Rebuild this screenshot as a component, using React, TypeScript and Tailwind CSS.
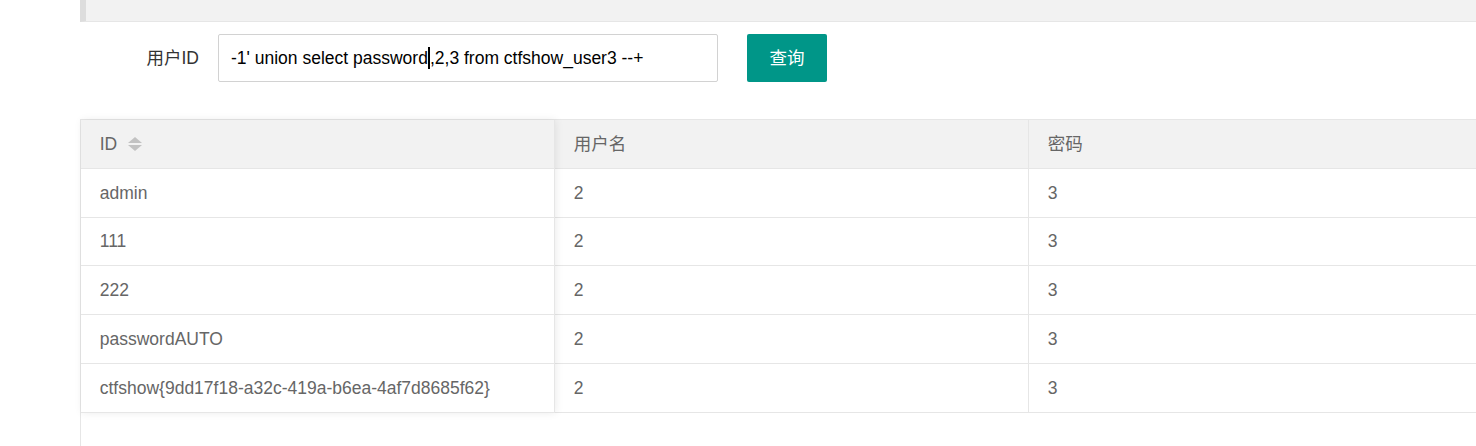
import React from "react";

const rows = [
  { id: "admin", name: "2", pass: "3" },
  { id: "111", name: "2", pass: "3" },
  { id: "222", name: "2", pass: "3" },
  { id: "passwordAUTO", name: "2", pass: "3" },
  { id: "ctfshow{9dd17f18-a32c-419a-b6ea-4af7d8685f62}", name: "2", pass: "3" },
];

const SortIcon = () => (
  <svg width="14" height="14" viewBox="0 0 14 14" className="ml-[11px]">
    <path d="M7 0 L14 6 H0 Z" fill="#c2c2c2" />
    <path d="M7 14 L14 8 H0 Z" fill="#c2c2c2" />
  </svg>
);

const cell = "h-[48.75px] border-b border-[#e6e6e6] flex items-center px-[18.75px] text-[17.5px] text-[#666] whitespace-nowrap";

const App = () => {
  return (
    <div
      className="w-[1476px] h-[446px] overflow-hidden bg-white"
      style={{ fontFamily: '"Liberation Sans", Arial, "Noto Sans CJK SC", sans-serif' }}
    >
      {/* top quote bar */}
      <div className="ml-[80px] h-[22px] bg-[#f2f2f2] border-l-[6px] border-[#dddddd] border-b border-b-[#e6e6e6]" />

      {/* search form */}
      <div className="mt-[12px] flex items-center">
        <div className="w-[218px] pr-[19px] text-right text-[17.5px] text-[#333]">用户ID</div>
        <div className="w-[500px] h-[48px] border border-[#d2d2d2] rounded-[2px] flex items-center pl-[12px] text-[17.5px] text-black whitespace-nowrap">
          <span>-1' union select password</span>
          <span className="inline-block w-[2px] h-[22px] bg-black" />
          <span>,2,3 from ctfshow_user3 --+</span>
        </div>
        <button className="ml-[29px] w-[80px] h-[48px] rounded-[2px] bg-[#009688] text-white text-[17.5px]">
          查询
        </button>
      </div>

      {/* table */}
      <div className="mt-[37px] ml-[80px] h-[400px] border-l border-t border-[#e6e6e6] flex">
        <div className="w-[474px] shrink-0 self-start relative z-10 bg-white border-r border-[#e6e6e6] shadow-[1px_0_8px_rgba(0,0,0,0.08)]">
          <div className={`${cell} bg-[#f2f2f2]`}>
            <span>ID</span>
            <SortIcon />
          </div>
          {rows.map((r, i) => (
            <div key={i} className={cell}>
              {r.id}
            </div>
          ))}
        </div>
        <div className="w-[474px] shrink-0 self-start border-r border-[#e6e6e6]">
          <div className={`${cell} bg-[#f2f2f2]`}>用户名</div>
          {rows.map((r, i) => (
            <div key={i} className={cell}>
              {r.name}
            </div>
          ))}
        </div>
        <div className="w-[500px] shrink-0 self-start">
          <div className={`${cell} bg-[#f2f2f2]`}>密码</div>
          {rows.map((r, i) => (
            <div key={i} className={cell}>
              {r.pass}
            </div>
          ))}
        </div>
      </div>
    </div>
  );
};

export default App;
